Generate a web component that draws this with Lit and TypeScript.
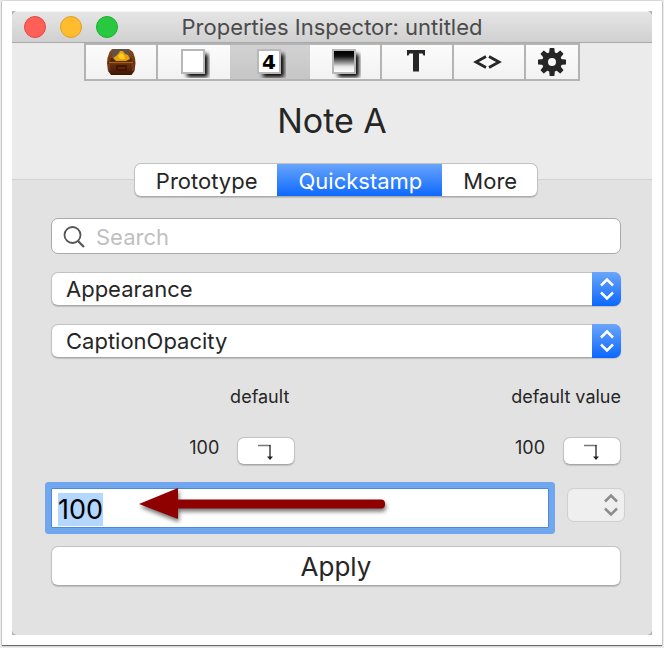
import { LitElement, html, svg, css } from "lit";
import { customElement, query, state } from "lit/decorators.js";
import { classMap } from "lit/directives/class-map.js";

const chest = svg`
  <defs>
    <linearGradient id="wood" x1="0" y1="0" x2="0" y2="1">
      <stop offset="0" stop-color="#8a4a1c" /><stop offset=".45" stop-color="#74370f" /><stop offset="1" stop-color="#3e1605" />
    </linearGradient>
    <filter id="smooth"><feGaussianBlur stdDeviation=".5" /></filter>
  </defs>
  <g filter="url(#smooth)">
    <path d="M5 1h17l4 3 2 6 .5 5-1 8-3 4H4l-3-4-1-8 .500-5 2-6z" fill="url(#wood)" />
    <path d="M7 1h14l3 10H4z" fill="#5e514c" />
    <path d="M4 10h20l1 4H3z" fill="#4a2a10" />
    <path d="M6 10l3-2 2-2 2-3 3 0 2 3 3 1 2 4-4 2H9z" fill="#e8a008" />
    <path d="M11 8l3-3 3 2 1 4-5 0z" fill="#ffcf1c" />
    <path d="M2 14.500h24" stroke="#a8622a" stroke-width="1.200" />
    <path d="M9 17h11v6H9z" fill="#401704" />
    <path d="M11 20h7" stroke="#7a3a14" stroke-width="1" />
    <path d="M2 16v7M26 16v7" stroke="#8c4a1e" stroke-width="1" />
  </g>`;

const sheet = (inner: unknown) => svg`
  <defs>
    <filter id="soft" x="-40%" y="-40%" width="180%" height="180%"><feGaussianBlur stdDeviation="1.9" /></filter>
    <linearGradient id="fade" x1="0" y1="0" x2="0" y2="1">
      <stop offset="0" stop-color="#000" /><stop offset=".25" stop-color="#111" />
      <stop offset=".75" stop-color="#e8e8e8" /><stop offset="1" stop-color="#fff" />
    </linearGradient>
  </defs>
  <rect x="9" y="8" width="21" height="23" fill="#000" filter="url(#soft)" />
  <rect x="4" y="4" width="22" height="23" fill="#fff" stroke="#b8b8b8" stroke-width="2" />
  ${inner}`;

const gearTeeth = [0, 45, 90, 135, 180, 225, 270, 315];

const tools = [
  { name: "Container", size: "mid", art: chest, box: "0 0 29 28" },
  { name: "Note", size: "mid", art: sheet(""), box: "0 0 32 32" },
  {
    name: "Values",
    size: "wide",
    box: "0 0 32 32",
    art: sheet(svg`<text class="digit" x="15" y="23" text-anchor="middle">4</text>`),
  },
  {
    name: "Shading",
    size: "mid",
    box: "0 0 32 32",
    art: sheet(svg`<rect x="5" y="5" width="20" height="21" fill="url(#fade)" />`),
  },
  {
    name: "Text",
    size: "mid",
    box: "0 0 32 32",
    art: svg`<path d="M6 4h18v5.500h-1.500l-1-2h-3.500v18h-6v-18h-3.500l-1 2H6z" fill="#262626" />`,
  },
  {
    name: "Code",
    size: "mid",
    box: "0 0 32 32",
    art: svg`<path d="M13 10.500L3 16l10 5.500M16 10.500L26 16l-10 5.500" fill="none" stroke="#262626" stroke-width="2.800" />`,
  },
  {
    name: "Settings",
    size: "narrow",
    box: "0 0 32 32",
    art: svg`
      ${gearTeeth.map(
        (a) => svg`<path d="M13.600 2.500q0-.5.500-.5h3.800q.5 0 .5.500L19 8h-6z" fill="#262626" transform="rotate(${a} 16 16)" />`
      )}
      <circle cx="16" cy="16" r="7" fill="none" stroke="#262626" stroke-width="6" />`,
  },
];

const chevrons = svg`<path d="M8 10.500l6-6 6 6M8 17.500l6 6 6-6" fill="none" stroke="currentColor" />`;

@customElement("app-root")
export class AppRoot extends LitElement {
  static styles = css`
    :host {
      display: flex;
      min-height: 100vh;
      box-sizing: border-box;
      padding: 1px 2px 3px;
      background: #ececec;
      font-family: Inter, "Liberation Sans", sans-serif;
      color: #262626;
    }
    * {
      box-sizing: border-box;
    }
    button,
    input,
    select {
      font: inherit;
      color: inherit;
      margin: 0;
      outline: none;
      appearance: none;
    }
    svg {
      display: block;
    }
    .frame {
      flex: 1;
      display: flex;
      padding: 10px;
      background: #fff;
      box-shadow: 0 1px 1px rgba(0, 0, 0, 0.5), 0 0 1px rgba(0, 0, 0, 0.5);
    }
    .mat {
      flex: 1;
      display: flex;
      background: #b4b4b4;
    }
    .window {
      flex: 1;
      display: flex;
      flex-direction: column;
      border-radius: 6px;
      overflow: hidden;
      background: #ebebeb;
    }
    .titlebar {
      height: 32px;
      display: grid;
      grid-template-columns: 1fr auto 1fr;
      align-items: center;
      padding: 0 12px;
      background: linear-gradient(#e6e6e6, #d0d0d0);
      border-bottom: 1px solid #a9a9a9;
      box-shadow: inset 0 1px #f4f4f4;
    }
    .lights {
      display: flex;
      gap: 14px;
    }
    .light {
      width: 22px;
      height: 22px;
      padding: 0;
      border-radius: 50%;
      border: 1px solid;
    }
    .close {
      background: #fe5f57;
      border-color: #e2463f;
    }
    .minimise {
      background: #febc2e;
      border-color: #dfa023;
    }
    .zoom {
      background: #28c840;
      border-color: #1dad2b;
    }
    .title {
      margin: 0;
      font-size: 22px;
      font-weight: 400;
      line-height: 30px;
      color: #4b4b4b;
    }
    .tools {
      align-self: center;
      display: flex;
      border: 2px solid #b4b4b4;
    }
    .tool {
      display: flex;
      align-items: center;
      justify-content: center;
      height: 34px;
      padding: 0;
      border: 0;
      background: linear-gradient(#fcfcfc, #f2f2f2);
    }
    .tool svg {
      width: 32px;
      height: 32px;
    }
    .tool:first-child svg {
      width: 29px;
      height: 28px;
    }
    .mid {
      width: 72px;
    }
    .wide {
      width: 80px;
    }
    .narrow {
      width: 52px;
    }
    .ruled {
      border-right: 2px solid #b4b4b4;
    }
    .tool.on {
      background: linear-gradient(#d2d2d2, #c6c6c6);
    }
    .digit {
      font: 700 20px "DejaVu Sans", sans-serif;
      fill: #000;
    }
    .heading {
      margin: 0;
      height: 98px;
      line-height: 80px;
      font-size: 34px;
      font-weight: 400;
      text-align: center;
    }
    .panel {
      flex: 1;
      display: flex;
      flex-direction: column;
      padding: 0 31px 48px 39px;
      background: #e2e2e2;
      border-top: 1px solid #d2d2d2;
    }
    .tabs {
      align-self: center;
      display: flex;
      margin: -17px 0 21px;
      height: 34px;
      border-radius: 7px;
      overflow: hidden;
      background: #fff;
      border: 1px solid #c2c2c2;
      border-bottom-color: #aaa;
      box-shadow: 0 1px 1px rgba(0, 0, 0, 0.15);
      font-size: 22px;
    }
    .tab {
      padding: 2px 20px 0 21px;
      border: 0;
      background: none;
    }
    .tab.on {
      margin: -1px 0;
      color: #fff;
      background: linear-gradient(#6ba6fb, #0a67ff);
    }
    .box {
      position: relative;
      display: block;
      margin-bottom: 18px;
      font-size: 22px;
    }
    .search,
    .choice,
    .push {
      width: 100%;
      background: #fff;
      border: 1px solid #c2c2c2;
      border-bottom-color: #a8a8a8;
      border-radius: 7px;
    }
    .search {
      height: 36px;
      padding: 2px 12px 0 44px;
      border-color: #a8a8a8;
    }
    .search::placeholder {
      color: #bfbfbf;
      opacity: 1;
    }
    .lens {
      position: absolute;
      left: 11px;
      top: 7px;
      width: 24px;
      height: 24px;
    }
    .choice {
      display: block;
      height: 34px;
      padding: 0 44px 0 14px;
      box-shadow: 0 1px 1px rgba(0, 0, 0, 0.15);
    }
    .cap {
      position: absolute;
      right: 0;
      top: 0;
      width: 29px;
      height: 34px;
      display: grid;
      place-items: center;
      border-radius: 0 7px 7px 0;
      color: #fff;
      pointer-events: none;
    }
    .cap svg {
      width: 28px;
      height: 28px;
      stroke-width: 2.5px;
    }
    .blue {
      background: linear-gradient(#6ba6fb, #0a67ff);
    }
    .grey {
      color: #8c8c8c;
    }
    .values {
      display: grid;
      grid-template-columns: 3fr 4fr;
      row-gap: 28px;
      margin: 9px 0 23px;
      font-size: 18px;
      line-height: 24px;
      text-align: right;
    }
    .label:first-child {
      padding-right: 6px;
    }
    .value {
      display: flex;
      justify-content: flex-end;
      gap: 18px;
    }
    .push {
      display: grid;
      place-items: center;
      padding: 0;
      box-shadow: 0 1px 1px rgba(0, 0, 0, 0.15);
    }
    .value span {
      line-height: 22px;
    }
    .small {
      width: 58px;
      height: 28px;
    }
    .entry {
      position: relative;
      display: flex;
      gap: 18px;
      margin: 0 -4px 18px 0;
    }
    .field {
      flex: 1;
      min-width: 0;
      height: 40px;
      padding: 2px 6px 0;
      border: 1px solid #4f8ad6;
      background: #fff;
      color: #000;
      font-size: 27px;
      line-height: 34px;
      box-shadow: 0 0 0 6px #71a7ee;
      border-radius: 1px;
    }
    .field::selection {
      background: #b3d7ff;
      color: #000;
    }
    .picker {
      position: relative;
      width: 58px;
      height: 34px;
    }
    .picker .choice {
      padding: 0;
      background: #efefef;
      border-color: #cfcfcf;
      opacity: 1;
      box-shadow: none;
    }
    .pointer {
      position: absolute;
      left: 84px;
      top: -4px;
      width: 256px;
      height: 44px;
      pointer-events: none;
      filter: drop-shadow(1px 3px 2px rgba(0, 0, 0, 0.55));
    }
    .apply {
      height: 40px;
      font-size: 26px;
    }
  `;

  @state() private tool = "Values";
  @state() private tab = "Quickstamp";
  @query(".field") private field!: HTMLInputElement;

  firstUpdated() {
    this.field.focus();
    this.field.select();
  }

  private reset() {
    this.field.value = "100";
    this.field.focus();
    this.field.select();
  }

  private renderChoice(label: string, value: string) {
    return html`<div class="box">
      <select class="choice" aria-label=${label}>
        <option>${value}</option>
      </select>
      <span class="cap blue"><svg viewBox="0 0 28 28">${chevrons}</svg></span>
    </div>`;
  }

  private renderValue(label: string) {
    return html`<div class="value">
      <span>100</span>
      <button class="push small" aria-label=${label} @click=${this.reset}>
        <svg width="20" height="20" viewBox="0 0 20 20">
          <path d="M2 4.500H14.500" stroke="#777" fill="none" stroke-width="1.500" />
          <path d="M14 4v14" stroke="#222" stroke-width="1.300" />
          <path d="M11 15.500h6l-3 3.500z" fill="#222" />
        </svg>
      </button>
    </div>`;
  }

  render() {
    return html`
      <div class="frame">
        <div class="mat">
          <main class="window">
            <header class="titlebar">
              <div class="lights">
                <button class="light close" aria-label="Close"></button>
                <button class="light minimise" aria-label="Minimise"></button>
                <button class="light zoom" aria-label="Zoom"></button>
              </div>
              <h1 class="title">Properties Inspector: untitled</h1>
            </header>
            <nav class="tools">
              ${tools.map(
                (t, i) => html`<button
                  class=${classMap({
                    tool: true,
                    [t.size]: true,
                    on: t.name === this.tool,
                    ruled: [0, 3, 4, 5].includes(i),
                  })}
                  aria-label=${t.name}
                  @click=${() => (this.tool = t.name)}
                >
                  <svg viewBox=${t.box}>${t.art}</svg>
                </button>`
              )}
            </nav>
            <h2 class="heading">Note A</h2>
            <section class="panel">
              <div class="tabs" role="tablist">
                ${["Prototype", "Quickstamp", "More"].map(
                  (t) => html`<button
                    role="tab"
                    aria-selected=${t === this.tab}
                    class=${classMap({ tab: true, on: t === this.tab })}
                    @click=${() => (this.tab = t)}
                  >
                    ${t}
                  </button>`
                )}
              </div>
              <label class="box">
                <svg class="lens" viewBox="0 0 24 24" fill="none" stroke="#555" stroke-width="1.800">
                  <circle cx="10.500" cy="10" r="8" />
                  <path d="M16 16l6 6" stroke-width="2.200" />
                </svg>
                <input class="search" type="text" placeholder="Search" aria-label="Search" />
              </label>
              ${this.renderChoice("Group", "Appearance")}
              ${this.renderChoice("Attribute", "CaptionOpacity")}
              <div class="values">
                <span class="label">default</span>
                <span class="label">default value</span>
                ${this.renderValue("Use default")} ${this.renderValue("Use default value")}
              </div>
              <div class="entry">
                <input class="field" type="text" aria-label="Value" value="100" />
                <div class="picker">
                  <select class="choice" aria-label="Preset values" disabled></select>
                  <span class="cap grey"><svg viewBox="0 0 28 28">${chevrons}</svg></span>
                </div>
                <svg class="pointer" viewBox="0 0 256 44">
                  <path
                    d="M4 20L43 4v11.500H246a4 4 0 0 1 4 4v1a4 4 0 0 1-4 4H43V35z"
                    fill="#8f0000"
                  />
                </svg>
              </div>
              <button class="push apply">Apply</button>
            </section>
          </main>
        </div>
      </div>
    `;
  }
}
